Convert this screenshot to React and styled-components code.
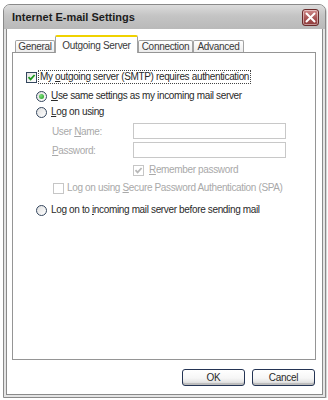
import React from "react";
import styled, { createGlobalStyle } from "styled-components";

const GlobalStyle = createGlobalStyle`
  html, body { margin: 0; padding: 0; background: #fff; }
  body {
    font-family: "Liberation Sans", Arial, sans-serif;
    font-size: 10px;
    color: #262626;
  }
`;

const Window = styled.div`
  box-sizing: border-box;
  width: 323px;
  height: 394px;
  margin: 4px 0 0 3px;
  border: 1px solid #8a8a8a;
  border-radius: 7px 7px 0 0;
  overflow: hidden;
  display: flex;
  flex-direction: column;
  background: #e4e4e4;
  box-shadow: 1px 1px 1px rgba(0, 0, 0, 0.18);
`;

const TitleBar = styled.div`
  flex: none;
  height: 24px;
  display: flex;
  align-items: center;
  justify-content: space-between;
  padding: 0 6px 0 8px;
  background: linear-gradient(#dcdcdc, #c4c4c4 45%, #b9b9b9);
`;

const Title = styled.span`
  font-family: "Liberation Sans", Arial, sans-serif;
  font-weight: bold;
  font-size: 11px;
  color: #1c1c1c;
`;

const CloseButton = styled.div`
  box-sizing: border-box;
  width: 17px;
  height: 17px;
  border: 1px solid #6a2a2a;
  border-radius: 3px;
  background: linear-gradient(#cf8a8a, #a55050 60%, #8e3c3c);
  box-shadow: inset 0 0 0 1px rgba(255, 255, 255, 0.45);
  display: flex;
  align-items: center;
  justify-content: center;
`;

const Frame = styled.div`
  flex: 1;
  display: flex;
  padding: 0 2px 2px;
`;

const Client = styled.div`
  flex: 1;
  display: flex;
  flex-direction: column;
  background: #fff;
  border: 1px solid #8a8a8a;
  border-top: none;
  padding: 6px 6px 8px 5px;
`;

const TabStrip = styled.div`
  flex: none;
  height: 17px;
  display: flex;
  align-items: flex-end;
  padding-left: 3px;
`;

const Tab = styled.div`
  box-sizing: border-box;
  width: ${(p) => p.$w}px;
  height: ${(p) => (p.$active ? 18 : 12)}px;
  margin-bottom: ${(p) => (p.$active ? -1 : 0)}px;
  position: relative;
  z-index: ${(p) => (p.$active ? 1 : 0)};
  display: flex;
  align-items: ${(p) => (p.$active ? "flex-start" : "center")};
  padding-top: ${(p) => (p.$active ? 3 : 0)}px;
  justify-content: center;
  border: 1px solid #a2a2a2;
  border-bottom: none;
  border-top: ${(p) => (p.$active ? "2px solid #f0d200" : "1px solid #a2a2a2")};
  border-radius: 2px 2px 0 0;
  background: ${(p) => (p.$active ? "#fff" : "linear-gradient(#ffffff, #ececec)")};
  color: #3a3a3a;
  letter-spacing: -0.3px;
  white-space: nowrap;
`;

const Panel = styled.div`
  flex: none;
  box-sizing: border-box;
  height: 308px;
  border: 1px solid #959595;
  background: #fff;
  padding: 16px 0 0 13px;
  display: flex;
  flex-direction: column;
`;

const Row = styled.div`
  display: flex;
  align-items: center;
  height: 16px;
  margin-top: ${(p) => p.$top || 0}px;
  padding-left: ${(p) => p.$indent || 0}px;
`;

const Label = styled.span`
  margin-left: ${(p) => p.$gap ?? 3}px;
  padding: 0 1px;
  letter-spacing: -0.35px;
  white-space: nowrap;
  color: ${(p) => (p.$disabled ? "#a9a9a9" : "#2a2a2a")};
  outline: ${(p) => (p.$focus ? "1px dotted #444" : "none")};
  line-height: 12px;
`;

const FieldLabel = styled.span`
  width: 81px;
  flex: none;
  letter-spacing: -0.35px;
  color: #a9a9a9;
`;

const Input = styled.div`
  box-sizing: border-box;
  width: 153px;
  height: 16px;
  border: 1px solid #c8c8c8;
  background: #fff;
`;

const Key = styled.u`
  text-decoration: underline;
`;

const Box = styled.span`
  box-sizing: border-box;
  flex: none;
  width: 11px;
  height: 11px;
  border: 1px solid ${(p) => (p.$disabled ? "#c6c6c6" : "#34465e")};
  background: ${(p) =>
    p.$disabled ? "#fff" : "linear-gradient(135deg, #e2e2e2, #ffffff)"};
  display: flex;
  align-items: center;
  justify-content: center;
`;

const RadioCircle = styled.span`
  box-sizing: border-box;
  flex: none;
  width: 11px;
  height: 11px;
  border-radius: 50%;
  border: 1px solid #34465e;
  background: linear-gradient(135deg, #e0e0e0, #ffffff);
  display: flex;
  align-items: center;
  justify-content: center;
`;

const Dot = styled.span`
  width: 5px;
  height: 5px;
  border-radius: 50%;
  background: radial-gradient(circle at 35% 35%, #7de07d, #1f9a1f);
`;

const ButtonRow = styled.div`
  flex: none;
  display: flex;
  justify-content: flex-end;
  gap: 7px;
  margin-top: 9px;
  padding-right: 1px;
`;

const Button = styled.div`
  box-sizing: border-box;
  width: 63px;
  height: 17px;
  border: 1px solid #243454;
  border-radius: 3px;
  background: linear-gradient(#ffffff, #f6f6f6 55%, #e4e4e4 80%, #c8c8c8);
  box-shadow: inset 0 -2px 0 #bdbdbd;
  display: flex;
  align-items: center;
  justify-content: center;
  color: #2a2a2a;
  letter-spacing: -0.3px;
`;

function Check({ disabled }) {
  return (
    <Box $disabled={disabled}>
      <svg width="9" height="9" viewBox="0 0 9 9">
        <path
          d="M1.5 4.2 L3.6 6.4 L7.6 2"
          fill="none"
          stroke={disabled ? "#b8b8b8" : "#1f9a1f"}
          strokeWidth="1.8"
        />
      </svg>
    </Box>
  );
}

function Radio({ checked }) {
  return <RadioCircle>{checked && <Dot />}</RadioCircle>;
}

export default function App() {
  return (
    <>
      <GlobalStyle />
      <Window>
        <TitleBar>
          <Title>Internet E-mail Settings</Title>
          <CloseButton>
            <svg width="11" height="11" viewBox="0 0 11 11">
              <path
                d="M1.5 1.5 L9.5 9.5 M9.5 1.5 L1.5 9.5"
                stroke="#fff"
                strokeWidth="2"
                strokeLinecap="round"
              />
            </svg>
          </CloseButton>
        </TitleBar>
        <Frame>
          <Client>
            <TabStrip>
              <Tab $w={40}>General</Tab>
              <Tab $w={83} $active>
                Outgoing Server
              </Tab>
              <Tab $w={55}>Connection</Tab>
              <Tab $w={51}>Advanced</Tab>
            </TabStrip>
            <Panel>
              <Row>
                <Check />
                <Label $focus $gap={2}>
                  My <Key>o</Key>utgoing server (SMTP) requires authentication
                </Label>
              </Row>
              <Row $top={3} $indent={10}>
                <Radio checked />
                <Label>
                  <Key>U</Key>se same settings as my incoming mail server
                </Label>
              </Row>
              <Row $indent={10}>
                <Radio />
                <Label>
                  <Key>L</Key>og on using
                </Label>
              </Row>
              <Row $top={3} $indent={26}>
                <FieldLabel>
                  User <Key>N</Key>ame:
                </FieldLabel>
                <Input />
              </Row>
              <Row $top={3} $indent={26}>
                <FieldLabel>
                  <Key>P</Key>assword:
                </FieldLabel>
                <Input />
              </Row>
              <Row $top={4} $indent={107}>
                <Check disabled />
                <Label $disabled $gap={4}>
                  <Key>R</Key>emember password
                </Label>
              </Row>
              <Row $top={2} $indent={27}>
                <Box $disabled />
                <Label $disabled $gap={2}>
                  Log on using <Key>S</Key>ecure Password Authentication (SPA)
                </Label>
              </Row>
              <Row $top={6} $indent={10}>
                <Radio />
                <Label>
                  Log on to <Key>i</Key>ncoming mail server before sending mail
                </Label>
              </Row>
            </Panel>
            <ButtonRow>
              <Button>OK</Button>
              <Button>Cancel</Button>
            </ButtonRow>
          </Client>
        </Frame>
      </Window>
    </>
  );
}
